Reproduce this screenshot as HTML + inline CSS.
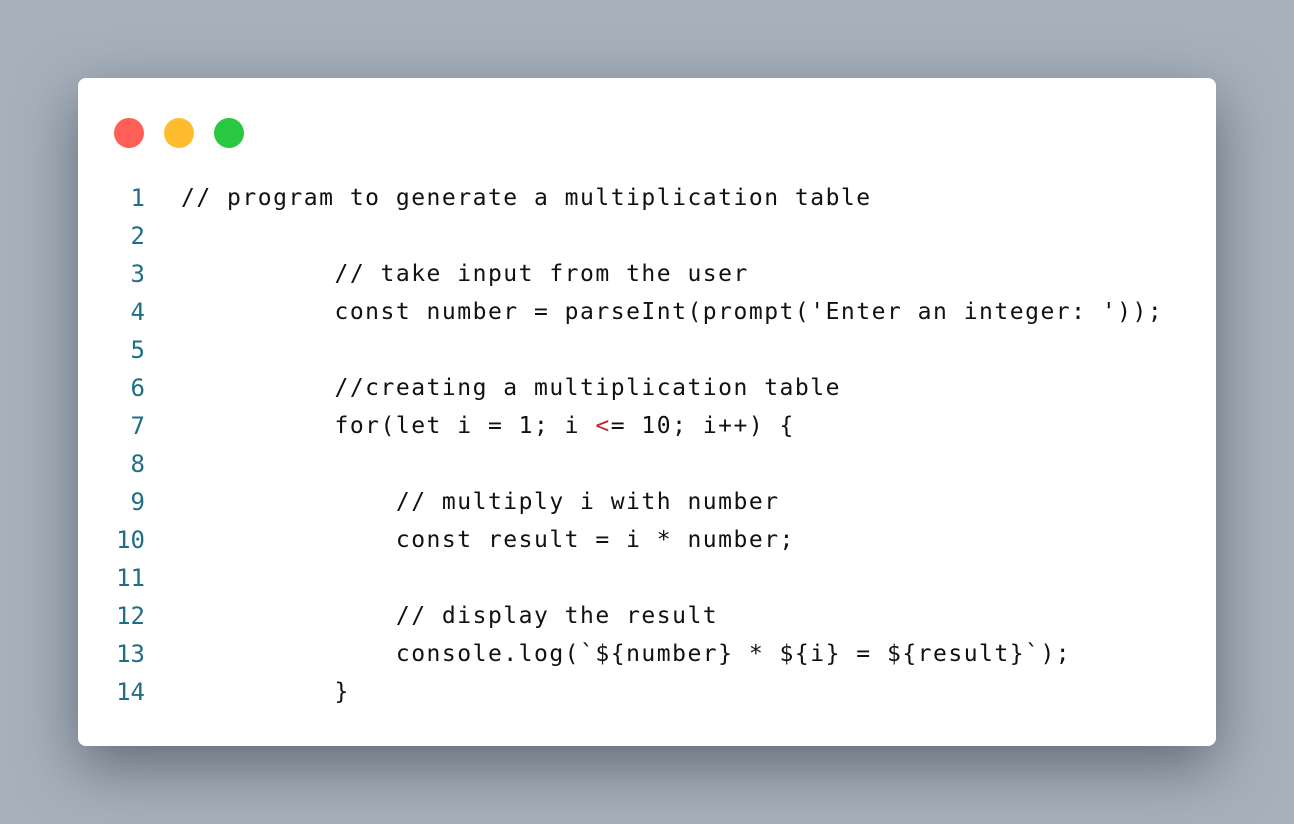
<!DOCTYPE html>
<html><head><style>
html,body{margin:0;padding:0;}
body{width:1294px;height:824px;background:#a7b1bc;position:relative;overflow:hidden;}
.card{position:absolute;left:78px;top:78px;width:1138px;height:668px;background:#fff;border-radius:8px;box-shadow:0 20px 60px rgba(40,50,60,0.55);}
.dot{position:absolute;top:40px;width:30px;height:30px;border-radius:50%;}
.code{position:absolute;left:0;top:101px;font-family:"DejaVu Sans Mono","Liberation Mono",monospace;font-size:23px;line-height:38px;color:#111;}
.ln{position:absolute;left:0;width:67px;text-align:right;color:#1f6e86;font-size:24px;}
.tx{position:absolute;left:103px;white-space:pre;letter-spacing:1.5px;}
.r{color:#c0262a;}
</style></head><body>
<div class="card">
<div class="dot" style="left:36px;background:#ff5f57"></div>
<div class="dot" style="left:86px;background:#febc2e"></div>
<div class="dot" style="left:136px;background:#28c840"></div>
<div class="code">
<div class="ln" style="top:0">1</div><div class="tx" style="top:0">// program to generate a multiplication table</div>
<div class="ln" style="top:38px">2</div>
<div class="ln" style="top:76px">3</div><div class="tx" style="top:76px">          // take input from the user</div>
<div class="ln" style="top:114px">4</div><div class="tx" style="top:114px">          const number = parseInt(prompt('Enter an integer: '));</div>
<div class="ln" style="top:152px">5</div>
<div class="ln" style="top:190px">6</div><div class="tx" style="top:190px">          //creating a multiplication table</div>
<div class="ln" style="top:228px">7</div><div class="tx" style="top:228px">          for(let i = 1; i <span class="r">&lt;</span>= 10; i++) {</div>
<div class="ln" style="top:266px">8</div>
<div class="ln" style="top:304px">9</div><div class="tx" style="top:304px">              // multiply i with number</div>
<div class="ln" style="top:342px">10</div><div class="tx" style="top:342px">              const result = i * number;</div>
<div class="ln" style="top:380px">11</div>
<div class="ln" style="top:418px">12</div><div class="tx" style="top:418px">              // display the result</div>
<div class="ln" style="top:456px">13</div><div class="tx" style="top:456px">              console.log(`${number} * ${i} = ${result}`);</div>
<div class="ln" style="top:494px">14</div><div class="tx" style="top:494px">          }</div>
</div>
</div>
</body></html>
